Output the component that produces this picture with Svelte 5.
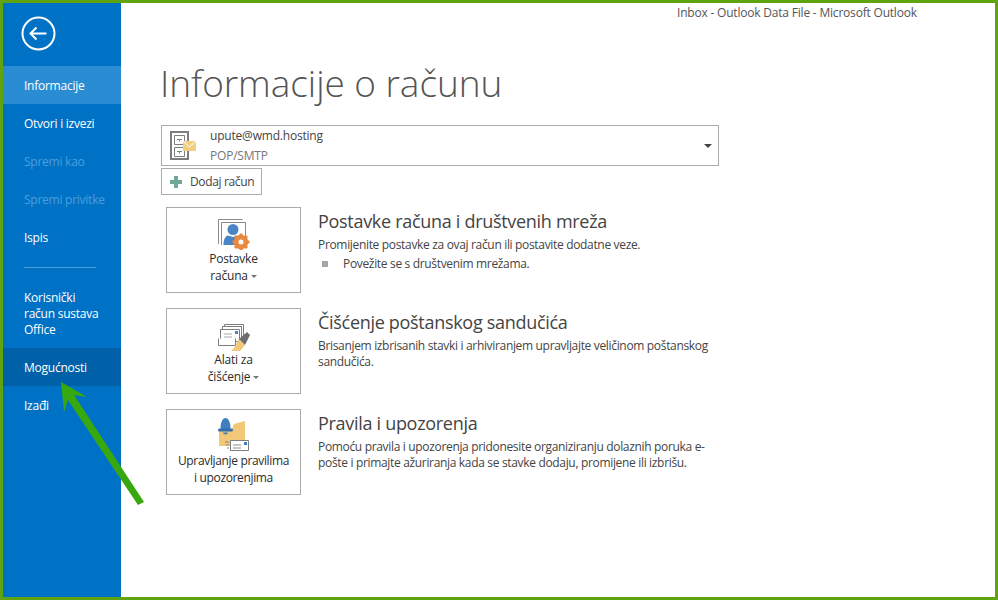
<script>
	const navItems = [
		{ label: 'Informacije', state: 'current' },
		{ label: 'Otvori i izvezi' },
		{ label: 'Spremi kao', state: 'disabled' },
		{ label: 'Spremi privitke', state: 'disabled' },
		{ label: 'Ispis' }
	];
</script>

<div class="frame">
	<aside class="sidebar">
		<div class="back">
			<svg width="35" height="35" viewBox="0 0 35 35" fill="none" stroke="#fff">
				<circle cx="17.500" cy="17.500" r="16" stroke-width="2" />
				<path d="M9.500 17.500h16M15.500 11.500l-6 6 6 6" stroke-width="2" />
			</svg>
		</div>
		<nav>
			{#each navItems as item}
				<div class="nav-item {item.state ?? ''}">{item.label}</div>
			{/each}
			<div class="divider"></div>
			<div class="nav-item multi">Korisnički<br />račun sustava<br />Office</div>
			<div class="nav-item hover">Mogućnosti</div>
			<div class="nav-item">Izađi</div>
		</nav>
	</aside>

	<main>
		<div class="window-title">Inbox - Outlook Data File - Microsoft Outlook</div>
		<h1>Informacije o računu</h1>

		<div class="account">
			<svg class="account-icon" width="27" height="29" viewBox="0 0 27 29" fill="none">
				<path d="M1 1h17v27H1z" fill="#fff" stroke="#7d7d7d" stroke-width="2" />
				<path d="M4.500 4.500h10v9h-10zM4.500 16.500h10v9h-10z" stroke="#7d7d7d" />
				<path d="M7 8.500h5M9.500 8.500v2M7 20.500h5M9.500 20.500v2" stroke="#7d7d7d" />
				<path d="M13 10h13v10H13z" fill="#f2cf83" />
				<path d="M13 10l6.500 6 6.500-6" stroke="#fff" />
			</svg>
			<div class="account-text">
				<div class="email">upute@wmd.hosting</div>
				<div class="type">POP/SMTP</div>
			</div>
			<span class="caret"></span>
		</div>

		<button class="add">
			<svg width="12" height="12" viewBox="0 0 12 12"><path d="M4 0h4v4h4v4H8v4H4V8H0V4h4z" fill="#6fa896" /></svg>
			Dodaj račun
		</button>

		<section class="rows">
			<div class="row">
				<div class="tile">
					<div class="icon">
						<svg width="32" height="31" viewBox="0 0 32 31" fill="none">
							<path d="M.5 25V.500h24" stroke="#8a8a8a" />
							<path d="M3.500 26V3.500h24v14" stroke="#8a8a8a" />
							<circle cx="15" cy="10.500" r="5.500" fill="#4a86c5" />
							<path d="M5.500 26c0-6 2-9 4.500-9.500l5 1.500 4-1.500 1 9.500z" fill="#4a86c5" />
							<circle cx="23" cy="23" r="5.500" stroke="#e8893f" stroke-width="3.500" />
							<path d="M23 14.500v17M14.500 23h17M17 17l12 12M29 17L17 29" stroke="#e8893f" stroke-width="3" />
							<circle cx="23" cy="23" r="2.500" fill="#fff" />
						</svg>
					</div>
					<span>Postavke<br />računa <i class="tiny-caret"></i></span>
				</div>
				<div class="info">
					<h2>Postavke računa i društvenih mreža</h2>
					<p>Promijenite postavke za ovaj račun ili postavite dodatne veze.</p>
					<p class="bullet"><b></b>Povežite se s društvenim mrežama.</p>
				</div>
			</div>

			<div class="row">
				<div class="tile">
					<div class="icon">
						<svg width="32" height="27" viewBox="0 0 32 27" fill="none">
							<path d="M6.500.500h19v13h-19z" fill="#fff" stroke="#7d7d7d" />
							<path d="M4.500 2.500h19v13h-19z" fill="#fff" stroke="#7d7d7d" />
							<path d="M2.500 5.500h19v12h-19z" fill="#fff" stroke="#7d7d7d" />
							<path d="M17 7h3v3h-3z" fill="#4a86c5" />
							<path d="M6 10h8M6 13h8" stroke="#a9a9a9" />
							<path d="M.5 14.500v7h17v-7" fill="#fff" stroke="#7d7d7d" />
							<path d="M21 15l6 6-5 6h-9l3-3z" fill="#f2c777" />
							<path d="M21 15l8-7 3 3-5 10z" fill="#6d6d6d" />
						</svg>
					</div>
					<span>Alati za<br />čišćenje <i class="tiny-caret"></i></span>
				</div>
				<div class="info">
					<h2>Čišćenje poštanskog sandučića</h2>
					<p>Brisanjem izbrisanih stavki i arhiviranjem upravljajte veličinom poštanskog sandučića.</p>
				</div>
			</div>

			<div class="row">
				<div class="tile">
					<div class="icon">
						<svg width="32" height="34" viewBox="0 0 32 34" fill="none">
							<path d="M1 13h12l3-7 11-3v25H1z" fill="#f0c877" />
							<path d="M2.500 11c0-7 2-11 5-11s5 4 5 11z" fill="#3f7fc1" />
							<rect x="0" y="10.500" width="15" height="3" rx="1.500" fill="#2f6fb2" />
							<path d="M5 14.500h5a2.500 2 0 0 1-5 0z" fill="#3f7fc1" />
							<path d="M12.500 22.500h18v10h-18z" fill="#fff" stroke="#7d7d7d" />
							<path d="M26 24h3v3h-3z" fill="#3f7fc1" />
							<path d="M15 27h8M15 30h8M7 24h4M8 27h3M9 30h2" stroke="#8a8a8a" />
						</svg>
					</div>
					<span class="tight">Upravljanje pravilima<br />i upozorenjima</span>
				</div>
				<div class="info">
					<h2>Pravila i upozorenja</h2>
					<p>Pomoću pravila i upozorenja pridonesite organiziranju dolaznih poruka e-pošte i primajte ažuriranja kada se stavke dodaju, promijene ili izbrišu.</p>
				</div>
			</div>
		</section>
	</main>

	<svg class="arrow" width="90" height="125" viewBox="0 0 90 125">
		<path d="M1 0l26 15-13-2 70 107-6 3L8 18 4 30z" fill="#38a80f" />
	</svg>
</div>

<style>
	:global(body) {
		margin: 0;
		background: #fff;
	}

	.frame {
		position: relative;
		box-sizing: border-box;
		width: 998px;
		height: 600px;
		border: 3px solid #5fa30f;
		display: flex;
		overflow: hidden;
		font-family: "Open Sans", "Liberation Sans", sans-serif;
		color: #444;
		background: #fff;
	}

	.sidebar {
		width: 118px;
		flex-shrink: 0;
		background: #0072c6;
		color: #fff;
		font-size: 12px;
		letter-spacing: -0.25px;
	}

	.back {
		height: 63px;
		padding: 13px 0 0 18px;
		box-sizing: border-box;
	}

	.nav-item {
		height: 38px;
		line-height: 40px;
		padding-left: 21px;
		white-space: nowrap;
	}

	.nav-item.current {
		background: #2a8dd4;
	}

	.nav-item.disabled {
		color: #4a9fdc;
	}

	.nav-item.hover {
		background: #0060a8;
	}

	.nav-item.multi {
		height: auto;
		line-height: 16px;
		padding-top: 22px;
		padding-bottom: 10px;
	}

	.divider {
		height: 1px;
		margin: 11px 25px 0 21px;
		background: #4a9fdc;
	}

	main {
		flex: 1;
		padding-left: 40px;
		font-size: 12px;
		letter-spacing: -0.2px;
	}

	.window-title {
		margin-left: 516px;
		margin-top: 1px;
		line-height: 18px;
		white-space: nowrap;
		color: #555;
	}

	h1 {
		margin: 36px 0 0 -1px;
		font-size: 37px;
		line-height: 50px;
		height: 48px;
		font-weight: 300;
		letter-spacing: -0.05px;
		color: #555;
	}

	.account {
		margin-top: 19px;
		box-sizing: border-box;
		width: 558px;
		height: 41px;
		border: 1px solid #ababab;
		display: flex;
		align-items: center;
		padding: 0 6px 0 8px;
	}

	.account-icon {
		flex-shrink: 0;
	}

	.account-text {
		flex: 1;
		margin-left: 13px;
		line-height: 20px;
	}

	.type {
		color: #777;
	}

	.caret {
		border: 4px solid transparent;
		border-top-color: #444;
		border-bottom: 0;
	}

	.add {
		margin-top: 2px;
		display: flex;
		align-items: center;
		gap: 8px;
		width: 101px;
		height: 27px;
		box-sizing: border-box;
		padding: 0 0 0 8px;
		background: #fff;
		border: 1px solid #ababab;
		font: inherit;
		letter-spacing: -0.35px;
		color: #444;
		white-space: nowrap;
	}

	.rows {
		margin-top: 12px;
		margin-left: 5px;
		display: flex;
		flex-direction: column;
		gap: 15px;
	}

	.row {
		display: flex;
		gap: 17px;
	}

	.tile {
		box-sizing: border-box;
		width: 135px;
		height: 86px;
		flex-shrink: 0;
		border: 1px solid #ababab;
		padding-top: 10px;
		display: flex;
		flex-direction: column;
		align-items: center;
		text-align: center;
		line-height: 17px;
		color: #2b2b2b;
		font-weight: 500;
	}

	.icon {
		height: 32px;
		display: flex;
		align-items: flex-end;
	}

	.tiny-caret {
		display: inline-block;
		vertical-align: middle;
		border: 3px solid transparent;
		border-top-color: #777;
		border-bottom: 0;
	}

	.tile .tight {
		letter-spacing: -0.35px;
		white-space: nowrap;
	}

	.info {
		width: 395px;
	}

	h2 {
		margin: 2px 0 4px;
		font-size: 18px;
		line-height: 24px;
		font-weight: 400;
		letter-spacing: -0.3px;
		color: #444;
	}

	p {
		margin: 0;
		line-height: 16px;
		letter-spacing: -0.33px;
	}

	.bullet {
		margin-top: 3px;
		padding-left: 4px;
		display: flex;
		align-items: center;
		gap: 15px;
	}

	.bullet b {
		width: 6px;
		height: 6px;
		background: #a6a6a6;
	}

	.arrow {
		position: absolute;
		left: 57px;
		top: 379px;
	}
</style>
